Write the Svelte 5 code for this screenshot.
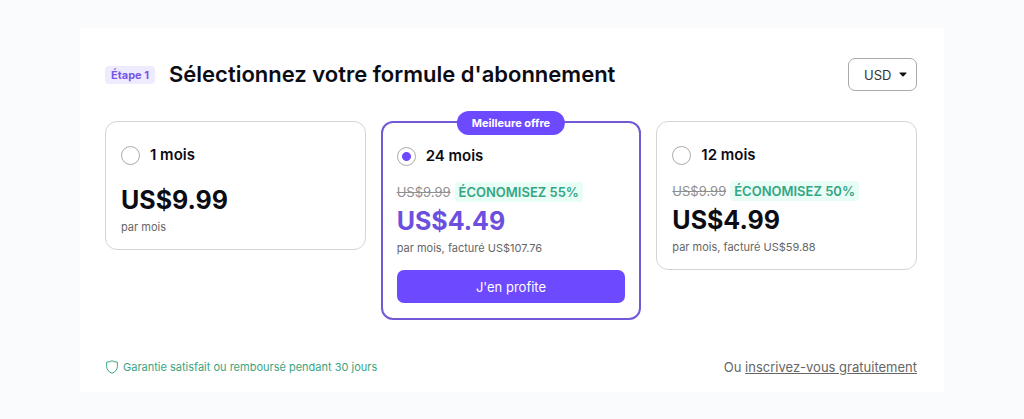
<script>
    const plans = [
        { id: 'm1', name: '1 mois', price: 'US$9.99', detail: 'par mois' },
        {
            id: 'm24',
            name: '24 mois',
            price: 'US$4.49',
            oldPrice: 'US$9.99',
            saving: 'ÉCONOMISEZ 55%',
            detail: 'par mois, facturé US$107.76',
            badge: 'Meilleure offre'
        },
        {
            id: 'm12',
            name: '12 mois',
            price: 'US$4.99',
            oldPrice: 'US$9.99',
            saving: 'ÉCONOMISEZ 50%',
            detail: 'par mois, facturé US$59.88'
        }
    ];

    let selected = $state('m24');
    let currency = $state('USD');
</script>

<main class="panel">
    <header class="header">
        <span class="step">Étape 1</span>
        <h1>Sélectionnez votre formule d'abonnement</h1>
        <div class="currency">
            <select aria-label="Devise" bind:value={currency}>
                <option>USD</option>
                <option>EUR</option>
                <option>CHF</option>
            </select>
            <svg class="caret" viewBox="0 0 8 5" aria-hidden="true">
                <path d="M0.8 0.5h6.4q0.6 0.2 0.2 0.7L4.6 4.2q-0.6 0.5-1.2 0L0.6 1.2q-0.4-0.5 0.2-0.7z" />
            </svg>
        </div>
    </header>

    <div class="plans">
        {#each plans as plan (plan.id)}
            <section class="plan" class:selected={selected === plan.id}>
                {#if plan.badge}
                    <span class="badge">{plan.badge}</span>
                {/if}
                <label class="plan-name">
                    <input type="radio" name="plan" value={plan.id} bind:group={selected} />
                    <span>{plan.name}</span>
                </label>
                {#if plan.saving}
                    <div class="discount">
                        <s>{plan.oldPrice}</s>
                        <span class="saving">{plan.saving}</span>
                    </div>
                {/if}
                <div class="price">{plan.price}</div>
                <div class="detail">{plan.detail}</div>
                {#if selected === plan.id}
                    <button class="buy" type="button">J'en profite</button>
                {/if}
            </section>
        {/each}
    </div>

    <footer class="footer">
        <span class="guarantee">
            <svg viewBox="0 0 14 14" aria-hidden="true">
                <path d="M7 0.8C8.8 1.7 10.6 2.1 12.4 2.2V6.6C12.4 9.8 10.2 12 7 13.3C3.8 12 1.6 9.8 1.6 6.6V2.2C3.4 2.1 5.2 1.7 7 0.8z" />
            </svg>
            Garantie satisfait ou remboursé pendant 30 jours
        </span>
        <span class="free">Ou <a href="#inscription">inscrivez-vous gratuitement</a></span>
    </footer>
</main>

<style>
    :global(body) {
        background: #f9fbfd;
        font-family: Inter, 'Liberation Sans', sans-serif;
        color: #0c0c14;
    }

    .panel {
        margin: 28px 80px 0;
        padding: 30px 27px 15px 25px;
        background: #fff;
    }

    .header {
        display: flex;
        align-items: center;
        margin-bottom: 30px;
    }

    .step {
        padding: 0 6px;
        border-radius: 4px;
        background: #efebff;
        color: #7458e8;
        font-size: 11px;
        font-weight: 700;
        line-height: 18px;
    }

    h1 {
        margin: 0 auto 0 14px;
        padding-bottom: 2px;
        font-size: 22px;
        font-weight: 600;
        line-height: 28px;
    }

    .currency {
        position: relative;
    }

    select {
        display: block;
        appearance: none;
        width: 69px;
        height: 33px;
        padding: 0 15px;
        border: 1px solid #aaa;
        border-radius: 7px;
        background: #fff;
        color: #333;
        font-family: inherit;
        font-size: 13px;
    }

    .caret {
        position: absolute;
        top: 14px;
        right: 10px;
        width: 8px;
        height: 5px;
        fill: #111;
        pointer-events: none;
    }

    .plans {
        display: grid;
        grid-template-columns: repeat(3, 1fr);
        gap: 15px;
        align-items: start;
        min-height: 199px;
    }

    .plan {
        position: relative;
        padding: 23px 15px 14px;
        border: 1px solid #d4d4d4;
        border-radius: 12px;
    }

    .plan.selected {
        padding: 23px 14px 15px;
        border: 2px solid #7459d6;
    }

    .badge {
        position: absolute;
        top: 0;
        left: 50%;
        padding: 0 15px;
        border-radius: 12px;
        background: #6d4aff;
        color: #fff;
        font-size: 11px;
        font-weight: 700;
        line-height: 24px;
        white-space: nowrap;
        transform: translate(-50%, -50%);
    }

    .plan-name {
        display: flex;
        align-items: center;
        gap: 10px;
        margin-bottom: 16px;
        font-size: 15px;
        font-weight: 600;
        line-height: 20px;
    }

    .plan-name input {
        appearance: none;
        box-sizing: border-box;
        width: 19px;
        height: 19px;
        margin: 0;
        border: 1px solid #aaa;
        border-radius: 50%;
        background: #fff;
    }

    .plan-name input:checked {
        background: radial-gradient(circle, #6d4aff 4px, #fff 5px);
    }

    .discount {
        display: flex;
        align-items: center;
        gap: 4px;
        line-height: 20px;
    }

    .discount s {
        color: #8f8f8f;
        font-size: 13px;
    }

    .saving {
        padding: 0 4px;
        border-radius: 4px;
        background: #e8fdf6;
        color: #35a583;
        font-size: 13px;
        font-weight: 600;
    }

    .price {
        font-size: 25px;
        font-weight: 700;
        line-height: 38px;
    }

    .selected .price {
        color: #6d4fe0;
    }

    .detail {
        color: #666;
        font-size: 11px;
        line-height: 16px;
    }

    .buy {
        display: block;
        width: 100%;
        height: 33px;
        margin-top: 14px;
        border: 0;
        border-radius: 7px;
        background: #6d4aff;
        color: #fff;
        font-family: inherit;
        font-size: 13px;
    }

    .footer {
        display: flex;
        align-items: center;
        justify-content: space-between;
        margin-top: 37px;
        line-height: 20px;
    }

    .guarantee {
        display: flex;
        align-items: center;
        gap: 4px;
        color: #3ba47f;
        font-size: 11px;
    }

    .guarantee svg {
        width: 14px;
        height: 14px;
        fill: none;
        stroke: #3ba47f;
        stroke-width: 1;
        stroke-linejoin: round;
    }

    .free {
        color: #666;
        font-size: 13px;
    }

    .free a {
        color: inherit;
    }
</style>
